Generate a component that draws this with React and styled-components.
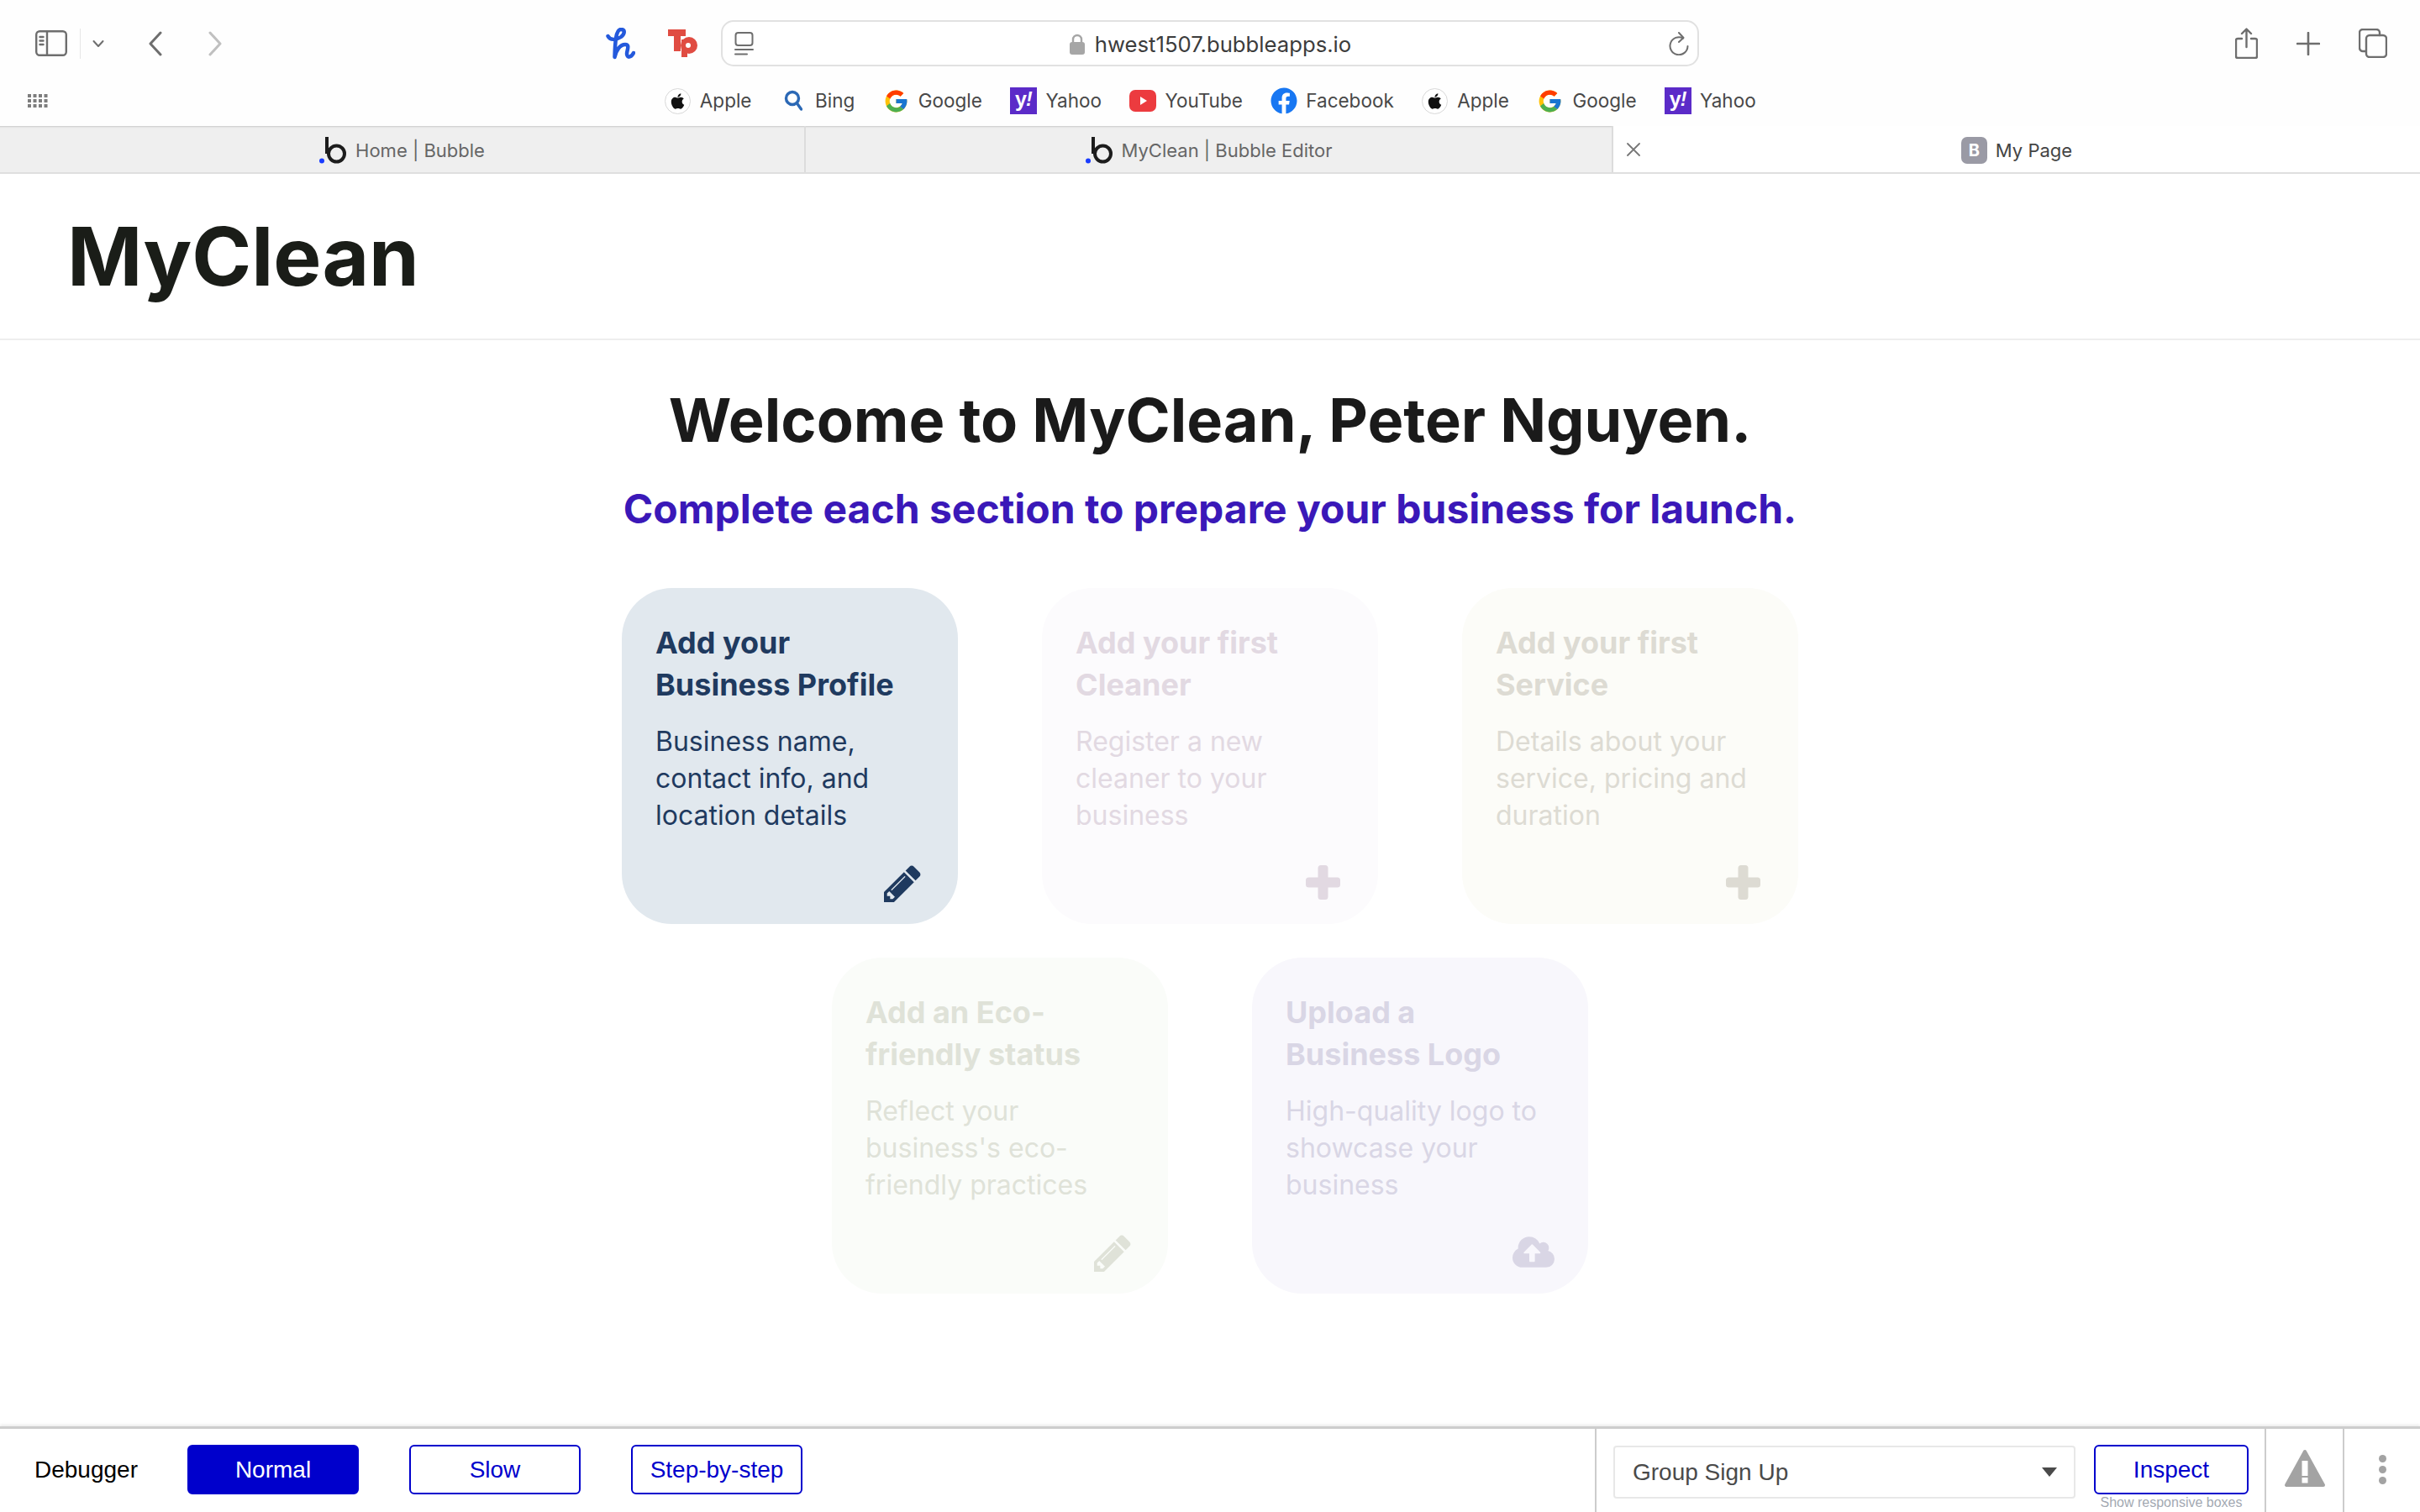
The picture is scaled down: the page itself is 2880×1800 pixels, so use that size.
import React from "react";
import styled, { createGlobalStyle } from "styled-components";
import { FaApple, FaFacebook } from "react-icons/fa";
import { FcGoogle } from "react-icons/fc";

const Global = createGlobalStyle`
  html, body { margin: 0; padding: 0; background: #fff; }
  * { box-sizing: border-box; }
  #root { width: 2880px; height: 1800px; overflow: hidden; }
`;

const Page = styled.div`
  width: 2880px; height: 1800px; display: flex; flex-direction: column;
  font-family: Inter, "Liberation Sans", sans-serif; background: #fff;
`;

/* browser chrome */
const Chrome = styled.header`height: 150px; display: flex; flex-direction: column; background: #fefefe;`;
const TopRow = styled.div`
  height: 94px; padding-top: 24px; display: grid; grid-template-columns: 858px 1164px 1fr; align-items: start;
`;
const LeftGroup = styled.div`height: 55px; display: flex; align-items: center; padding-left: 42px;`;
const Spacer = styled.span`width: ${p => p.$w}px; flex: none;`;
const Logos = styled.div`margin-left: auto; margin-right: 28px; display: flex; align-items: center; gap: 39px;`;
const VSep = styled.span`width: 1px; height: 36px; background: #e6e6e6; margin: 0 14px 0 15px;`;
const UrlBar = styled.div`
  height: 55px; border: 2px solid #e1e1e1; border-radius: 15px; background: #fff; display: flex; align-items: center;
  padding: 0 10px 0 14px;
`;
const UrlCenter = styled.div`flex: 1; display: flex; align-items: center; justify-content: center; gap: 12px; padding: 2px 2px 0 0;`;
const UrlText = styled.span`font-size: 25.7px; color: #3c3c3c; line-height: 1;`;
const RightGroup = styled.div`height: 55px; display: flex; align-items: center; justify-content: flex-end; gap: 46px; padding-right: 39px;`;
const BookRow = styled.div`
  height: 52px; display: grid; grid-template-columns: 1fr auto 1fr; align-items: center;
`;
const GridIcon = styled.span`display: flex; padding-left: 33px;`;
const Books = styled.nav`display: flex; align-items: center; gap: 33px;`;
const Book = styled.span`display: flex; align-items: center; gap: 10.5px; font-size: 22.5px; color: #484848; line-height: 1;`;
const Fav = styled.span`width: 32px; height: 32px; flex: none; display: flex; align-items: center; justify-content: center;`;
const AppleIco = styled.span`
  width: 31px; height: 31px; border-radius: 50%; border: 1.5px solid #d8d8d8; display: flex; align-items: center; justify-content: center;
  color: #111; font-size: 21px; background: #fff;
`;
const YahooIco = styled.span`
  width: 32px; height: 32px; background: #5b2bc8; color: #fff; display: flex; align-items: center; justify-content: center;
  font: 700 25px "Liberation Sans", sans-serif; letter-spacing: -1px; padding-bottom: 3px;
  i { font-size: 23px; }
`;

const TabRow = styled.div`height: 57px; display: grid; grid-template-columns: 959px 961px 960px; border-bottom: 2px solid #dfdfdf;`;
const Tab = styled.div`
  position: relative; display: flex; align-items: center; justify-content: center; gap: 10px; font-size: 22px; padding-top: 3px;
  background: ${p => (p.$active ? "#fff" : "#efefef")}; color: ${p => (p.$active ? "#444" : "#666")};
  border-right: ${p => (p.$active ? "none" : "2px solid #dcdcdc")};
  box-shadow: ${p => (p.$active ? "none" : "inset 0 3px 2px -2px #c9c9c9")};
`;
const CloseX = styled.span`position: absolute; left: 16px; top: 50%; transform: translateY(-50%); display: flex;`;
const BBadge = styled.span`
  width: 31px; height: 32px; border-radius: 7px; background: #9a9aa5; color: #fff; display: flex; align-items: center; justify-content: center;
  font-size: 20px; font-weight: 700;
`;

/* page header */
const SiteHeader = styled.div`height: 198px; border-bottom: 2px solid #eee; display: flex; align-items: center; padding-left: 80px;`;
const Brand = styled.h1`margin: 0; font-size: 96px; font-weight: 700; color: #1a1d18; line-height: 1;`;

const Main = styled.main`flex: 1; display: flex; flex-direction: column; align-items: center; padding-top: 50px;`;
const Welcome = styled.h2`margin: 0; font-size: 72px; line-height: 90px; font-weight: 700; color: #1a1a1a; text-align: center;`;
const Sub = styled.h3`margin: 31px 0 0; font-size: 48px; line-height: 60px; font-weight: 700; color: #3a18b8; text-align: center;`;
const Cards = styled.div`width: 1400px; margin-top: 64px; display: flex; flex-wrap: wrap; justify-content: center; gap: 40px 100px;`;
const Card = styled.section`
  position: relative; width: 400px; height: 400px; padding: 40px; border-radius: 60px; background: ${p => p.$bg}; color: ${p => p.$fg};
`;
const CardTitle = styled.h4`margin: 0; font-size: 36px; line-height: 50px; font-weight: 700;`;
const CardText = styled.p`margin: 21px 0 0; font-size: 32px; line-height: 44px; font-weight: 400;`;
const CardIcon = styled.span`position: absolute; display: flex; right: ${p => p.$r}px; bottom: ${p => p.$b}px;`;

/* debugger */
const Debugger = styled.footer`
  height: 102px; border-top: 3px solid #cdcdcd; box-shadow: 0 -2px 3px rgba(0,0,0,.08); background: #fff; display: flex; align-items: stretch;
  font-family: "Liberation Sans", Arial, sans-serif;
`;
const DebugLeft = styled.div`width: 1898px; display: flex; align-items: flex-start; padding: 19px 0 0 41px;`;
const DebugLabel = styled.span`width: 182px; font-size: 28px; line-height: 59px; color: #000;`;
const Speeds = styled.div`display: flex; gap: 60px;`;
const Btn = styled.button`
  width: ${p => p.$w || 204}px; height: 59px; border: 2px solid #0000cc; border-radius: 6px; padding: 0; font: 28px "Liberation Sans", Arial, sans-serif;
  background: ${p => (p.$on ? "#0000cc" : "#fff")}; color: ${p => (p.$on ? "#fff" : "#0000cc")};
`;
const DebugRight = styled.div`flex: 1; display: flex; border-left: 2px solid #ccc;`;
const SelectCell = styled.div`width: 797px; flex: none; display: flex; padding: 19px 0 0 20px; gap: 22px; border-right: 2px solid #ccc;`;
const Select = styled.div`
  width: 550px; height: 63px; border: 2px solid #e8e8e8; border-radius: 4px; display: flex; align-items: center; justify-content: space-between;
  padding: 0 20px 0 21px; font-size: 28px; color: #4a4a4a; margin-top: 1px;
`;
const Caret = styled.span`width: 0; height: 0; border: 9px solid transparent; border-top: 11px solid #4a4a4a; border-bottom: 0;`;
const InspectCol = styled.div`display: flex; flex-direction: column; align-items: center; width: 184px;`;
const Hint = styled.span`font-size: 16px; line-height: 20px; color: #a3a9b2; white-space: nowrap;`;
const WarnCell = styled.div`width: 93px; flex: none; display: flex; justify-content: center; padding-top: 24px; border-right: 2px solid #ccc;`;
const MoreCell = styled.div`flex: 1; display: flex; flex-direction: column; align-items: center; gap: 4px; padding-top: 31px;`;
const Dot = styled.span`width: 9px; height: 9px; border-radius: 50%; background: #a3a3a3;`;

const Ico = ({ w, h, children, sw = 2.4, c = "#6e6e6e" }) => (
  <svg width={w} height={h} viewBox={`0 0 ${w} ${h}`} fill="none" stroke={c} strokeWidth={sw} strokeLinecap="round" strokeLinejoin="round">
    {children}
  </svg>
);

const BubbleLogo = () => (
  <svg width="33" height="32" viewBox="0 0 33 32" fill="none">
    <circle cx="20.500" cy="20" r="9.500" stroke="#1c1c1c" strokeWidth="4" />
    <path d="M9 0V20" stroke="#1c1c1c" strokeWidth="4" />
    <circle cx="3" cy="28.500" r="3" fill="#1a3cff" />
  </svg>
);

const Pencil = () => (
  <svg width="44" height="44" viewBox="128 128 1536 1536" fill="currentColor">
    <path d="M491 1536l91-91-235-235-91 91v107h128v128h107zm523-928q0-22-22-22-10 0-17 7l-542 542q-7 7-7 17 0 22 22 22 10 0 17-7l542-542q7-7 7-17zm-54-192l416 416-832 832h-416v-416zm683 96q0 53-37 90l-166 166-416-416 166-165q36-38 90-38 53 0 91 38l235 234q37 39 37 91z" />
  </svg>
);

const Plus = () => (
  <svg width="41" height="41" viewBox="0 0 41 41" fill="currentColor">
    <rect x="14.500" y="0" width="12" height="41" rx="3.500" />
    <rect x="0" y="14.500" width="41" height="12" rx="3.500" />
  </svg>
);

const CloudUpload = () => (
  <svg width="50" height="37" viewBox="-64 128 1920 1408" fill="currentColor">
    <path d="M1216 864q0-14-9-23l-352-352q-9-9-23-9t-23 9l-351 351q-10 12-10 24 0 14 9 23t23 9h224v352q0 13 9.500 22.500t22.500 9.500h192q13 0 22.500-9.500t9.500-22.500v-352h224q13 0 22.500-9.500t9.500-22.500zm640 288q0 159-112.500 271.500t-271.500 112.500h-1088q-185 0-316.500-131.500t-131.500-316.500q0-130 70-240t188-165q-2-30-2-43 0-212 150-362t362-150q156 0 285.500 87t188.500 231q71-62 166-62 106 0 181 75t75 181q0 76-41 138 130 31 213.500 135.500t83.500 238.500z" />
  </svg>
);

const Warning = () => (
  <svg width="50" height="46" viewBox="0 0 50 46">
    <path d="M25 3L3 43h44z" fill="#a3a3a3" stroke="#a3a3a3" strokeWidth="4" strokeLinejoin="round" />
    <rect x="21.500" y="14" width="7" height="18" fill="#fff" />
    <rect x="21.500" y="34" width="7" height="6.500" fill="#fff" />
  </svg>
);

const AppleFav = () => <Fav><AppleIco><FaApple /></AppleIco></Fav>;
const GoogleFav = () => <Fav><FcGoogle size={31} /></Fav>;
const YahooFav = () => <Fav><YahooIco>y<i>!</i></YahooIco></Fav>;

const YouTubeFav = () => (
  <Fav>
    <svg width="32" height="32" viewBox="0 0 32 32">
      <rect y="3" width="32" height="26" rx="7" fill="#ec3b3f" />
      <path d="M13 11l8 5-8 5z" fill="#fff" />
    </svg>
  </Fav>
);

const BingFav = () => (
  <Fav>
    <Ico w={22} h={32} sw={3.400} c="#2b68b5">
      <circle cx="10" cy="13" r="7.500" />
      <path d="M15.500 19l5 7" />
    </Ico>
  </Fav>
);

export default function App() {
  return (
    <Page>
      <Global />
      <Chrome>
        <TopRow>
          <LeftGroup>
            <Ico w={38} h={31}>
              <rect x="1.200" y="1.200" width="35.600" height="28.600" rx="4" />
              <path d="M14 1.500V29.500M5.500 8h4M5.500 12.500h4M5.500 17h4" />
            </Ico>
            <VSep />
            <Ico w={14} h={10} sw={2}><path d="M1.500 2l5.500 6 5.500-6" /></Ico>
            <Spacer $w={52} />
            <Ico w={17} h={30} sw={3}><path d="M15 2L3 15l12 13" /></Ico>
            <Spacer $w={55} />
            <Ico w={17} h={30} sw={3} c="#c0c0c0"><path d="M2 2l12 13L2 28" /></Ico>
            <Logos>
              <svg width="35" height="38" viewBox="0 0 35 38" fill="none" stroke="#2459dc" strokeWidth="4.500" strokeLinecap="round" strokeLinejoin="round">
                <path d="M2.500 10C5 15 12 15 18 11C23 7 23 2 18 2C12 2 11 16 10.500 35C12 27 17 20 23 20C29 20 25 27 25 31C25 36 30 36 33 30" />
              </svg>
              <svg width="35" height="34" viewBox="0 0 35 34">
                <path d="M0 0h21v8h-6v18H7V8H0z" fill="#e04c42" />
                <rect x="16" y="12" width="7" height="21" fill="#e04c42" />
                <circle cx="25" cy="19" r="10" fill="#e04c42" />
                <circle cx="24" cy="19" r="3" fill="#fff" />
              </svg>
            </Logos>
          </LeftGroup>
          <UrlBar>
            <Ico w={23} h={28} sw={2}>
              <rect x="1.500" y="1" width="20" height="15" rx="3" />
              <path d="M1 21h21M1 26.500h14" />
            </Ico>
            <UrlCenter>
              <svg width="18" height="25" viewBox="0 0 18 25">
                <path d="M4 11V7a5 5 0 0 1 10 0v4" fill="none" stroke="#a6a6a6" strokeWidth="2.400" />
                <rect y="10" width="18" height="15" rx="3" fill="#a6a6a6" />
              </svg>
              <UrlText>hwest1507.bubbleapps.io</UrlText>
            </UrlCenter>
            <Ico w={24} h={28} sw={2}>
              <path d="M17 7.500A10.500 10.500 0 1 0 22.500 17" />
              <path d="M12 1l5.500 6-5.500 5" />
            </Ico>
          </UrlBar>
          <RightGroup>
            <Ico w={27} h={37}>
              <path d="M8 13H3a2 2 0 0 0-2 2v19a2 2 0 0 0 2 2h21a2 2 0 0 0 2-2V15a2 2 0 0 0-2-2h-5" />
              <path d="M13.500 23V2M8 7l5.500-5.500L19 7" />
            </Ico>
            <Ico w={28} h={28} sw={2.600}><path d="M14 1v26M1 14h26" /></Ico>
            <Ico w={34} h={35}>
              <path d="M8 27H5a4 4 0 0 1-4-4V5a4 4 0 0 1 4-4h16a4 4 0 0 1 4 4v3" />
              <rect x="9" y="8" width="24" height="26" rx="4" />
            </Ico>
          </RightGroup>
        </TopRow>
        <BookRow>
          <GridIcon>
            <svg width="24" height="16" viewBox="0 0 24 16" fill="#7d7d7d">
              {[0, 6, 12].map(y => [0, 6.500, 13, 19.500].map(x => <rect key={`${x}-${y}`} x={x} y={y} width="4" height="4" />))}
            </svg>
          </GridIcon>
          <Books>
            <Book><AppleFav />Apple</Book>
            <Book><BingFav />Bing</Book>
            <Book><GoogleFav />Google</Book>
            <Book><YahooFav />Yahoo</Book>
            <Book><YouTubeFav />YouTube</Book>
            <Book><Fav><FaFacebook size={32} color="#1877f2" /></Fav>Facebook</Book>
            <Book><AppleFav />Apple</Book>
            <Book><GoogleFav />Google</Book>
            <Book><YahooFav />Yahoo</Book>
          </Books>
          <span />
        </BookRow>
      </Chrome>
      <TabRow>
        <Tab><BubbleLogo />Home | Bubble</Tab>
        <Tab><BubbleLogo />MyClean | Bubble Editor</Tab>
        <Tab $active>
          <CloseX><Ico w={16} h={16} sw={1.800} c="#777"><path d="M1 1l14 14M15 1L1 15" /></Ico></CloseX>
          <BBadge>B</BBadge>My Page
        </Tab>
      </TabRow>
      <SiteHeader><Brand>MyClean</Brand></SiteHeader>
      <Main>
        <Welcome>Welcome to MyClean, Peter Nguyen.</Welcome>
        <Sub>Complete each section to prepare your business for launch.</Sub>
        <Cards>
          <Card $bg="#e1e8ee" $fg="#1f3a5f">
            <CardTitle>Add your<br />Business Profile</CardTitle>
            <CardText>Business name, contact info, and location details</CardText>
            <CardIcon $r={44} $b={26}><Pencil /></CardIcon>
          </Card>
          <Card $bg="#fcfbfd" $fg="#e2d9e2">
            <CardTitle>Add your first Cleaner</CardTitle>
            <CardText>Register a new cleaner to your business</CardText>
            <CardIcon $r={45} $b={29}><Plus /></CardIcon>
          </Card>
          <Card $bg="#fcfcf8" $fg="#dddbd3">
            <CardTitle>Add your first Service</CardTitle>
            <CardText>Details about your service, pricing and duration</CardText>
            <CardIcon $r={45} $b={29}><Plus /></CardIcon>
          </Card>
          <Card $bg="#fafcf9" $fg="#dfe2d8">
            <CardTitle>Add an Eco-friendly status</CardTitle>
            <CardText>Reflect your business's eco-friendly practices</CardText>
            <CardIcon $r={44} $b={26}><Pencil /></CardIcon>
          </Card>
          <Card $bg="#f8f7fc" $fg="#d9d6e5">
            <CardTitle>Upload a<br />Business Logo</CardTitle>
            <CardText>High-quality logo to showcase your business</CardText>
            <CardIcon $r={40} $b={31}><CloudUpload /></CardIcon>
          </Card>
        </Cards>
      </Main>
      <Debugger>
        <DebugLeft>
          <DebugLabel>Debugger</DebugLabel>
          <Speeds>
            <Btn $on>Normal</Btn>
            <Btn>Slow</Btn>
            <Btn>Step-by-step</Btn>
          </Speeds>
        </DebugLeft>
        <DebugRight>
          <SelectCell>
            <Select>Group Sign Up<Caret /></Select>
            <InspectCol>
              <Btn $w={184}>Inspect</Btn>
              <Hint>Show responsive boxes</Hint>
            </InspectCol>
          </SelectCell>
          <WarnCell><Warning /></WarnCell>
          <MoreCell><Dot /><Dot /><Dot /></MoreCell>
        </DebugRight>
      </Debugger>
    </Page>
  );
}
